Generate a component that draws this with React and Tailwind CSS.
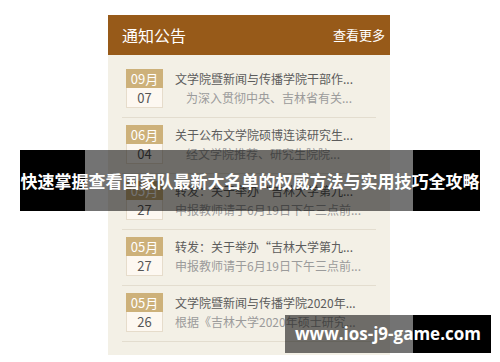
const notices = [
  { month: "09月", day: "07", title: "文学院暨新闻与传播学院干部作...", desc: "为深入贯彻中央、吉林省有关...", indent: true },
  { month: "06月", day: "04", title: "关于公布文学院硕博连读研究生...", desc: "经文学院推荐、研究生院院...", indent: true },
  { month: "05月", day: "27", title: "转发：关于举办“吉林大学第九...", desc: "申报教师请于6月19日下午三点前..." },
  { month: "05月", day: "27", title: "转发：关于举办“吉林大学第九...", desc: "申报教师请于6月19日下午三点前..." },
  { month: "05月", day: "26", title: "文学院暨新闻与传播学院2020年...", desc: "根据《吉林大学2020年硕士研究..." },
];

function NoticeItem({ item }) {
  return (
    <div className="flex items-start pt-[7px] pb-[9px] border-b border-[#e3ddcf]">
      {/* date block */}
      <div className="w-[37px] ml-[4px] flex flex-col text-[13px] leading-none">
        <div className="h-[19px] bg-[#cdb17a] text-white flex items-center justify-center">
          {item.month}
        </div>
        <div className="h-[20px] bg-[#fdf8f1] border border-t-0 border-[#e6dccb] text-[#555] flex items-center justify-center">
          {item.day}
        </div>
      </div>
      <div className="ml-[12px] flex flex-col text-[12px] leading-none">
        <div className="h-[19px] flex items-center text-[#5c5c5c]">
          {item.title}
        </div>
        <div
          className={
            item.indent
              ? "h-[20px] flex items-center text-[#9b9b9b] pl-[11px]"
              : "h-[20px] flex items-center text-[#9b9b9b]"
          }
        >
          {item.desc}
        </div>
      </div>
    </div>
  );
}

export default function App() {
  return (
    <div
      className="relative w-[500px] h-[362px] bg-white overflow-hidden"
      style={{ fontFamily: '"Noto Sans CJK SC", "Noto Sans", sans-serif' }}
    >
      <div className="pt-[15px] pl-[108px]">
        <div className="w-[282px] h-[340px] bg-[#f3f0e6]">
          {/* header */}
          <div className="h-[40px] bg-[#975a19] flex items-center justify-between pl-[14px] pr-[5px]">
            <div className="text-white text-[16px]">通知公告</div>
            <div className="text-white text-[13px]">查看更多</div>
          </div>
          {/* list */}
          <div className="px-[14px] pt-[7px]">
            {notices.map((n, i) => (
              <NoticeItem key={i} item={n} />
            ))}
          </div>
        </div>
      </div>

      {/* headline banner */}
      <div className="absolute left-[20px] top-[150px] w-[460px] h-[61px] flex">
        <div className="w-[65px] bg-black" />
        <div className="w-[328px] bg-black/55" />
        <div className="flex-1 bg-black" />
        <div className="absolute inset-0 flex items-center justify-center text-white font-bold text-[17px] whitespace-nowrap">
          快速掌握查看国家队最新大名单的权威方法与实用技巧全攻略
        </div>
      </div>

      {/* url watermark */}
      <div className="absolute left-[285px] top-[315px] w-[206px] h-[38px] flex">
        <div className="w-[128px] bg-black/55" />
        <div className="flex-1 bg-black" />
        <div
          className="absolute inset-0 flex items-center justify-center text-white font-bold text-[17px] whitespace-nowrap"
          style={{ fontFamily: '"Open Sans", "DejaVu Sans", sans-serif' }}
        >
          www.ios-j9-game.com
        </div>
      </div>
    </div>
  );
}
